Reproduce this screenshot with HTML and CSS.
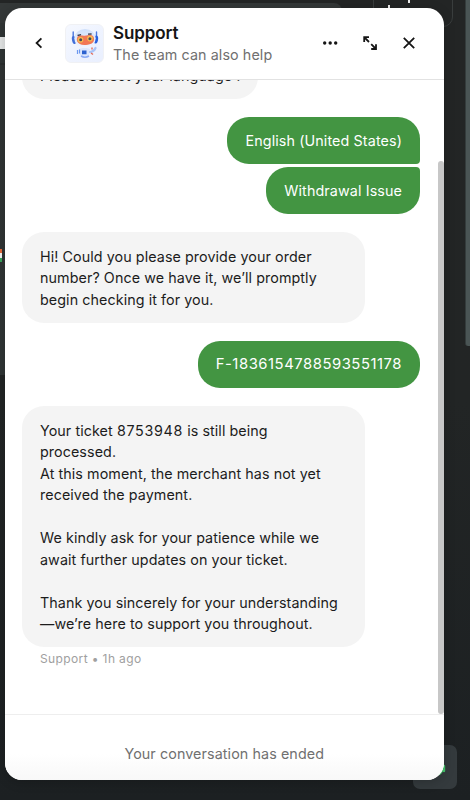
FILE: index.html
```html
<!DOCTYPE html>
<html lang="en">
<head>
    <meta charset="UTF-8">
    <meta name="viewport" content="width=device-width, initial-scale=1.0">
    <title>Support</title>
    <link rel="stylesheet" href="styles.css">
</head>
<body>
    <!-- Dimmed page behind the messenger -->
    <div class="backdrop">
        <div class="backdrop-top"></div>
        <div class="backdrop-left"></div>
        <div class="backdrop-tab"></div>
        <div class="backdrop-flag"></div>
        <div class="backdrop-card"></div>
        <div class="page-scrollbar"></div>
        <div class="launcher">
            <svg width="44" height="44" viewBox="0 0 44 44" fill="none" stroke="#45c46b" stroke-width="2.4" stroke-linecap="round"><path d="M26 29c2-1 3-3 4-6M31 21v5"/></svg>
        </div>
    </div>

    <div class="messenger">
        <header class="messenger-header">
            <button class="icon-button back-button" aria-label="Back">
                <svg width="20" height="20" viewBox="0 0 20 20" fill="none" stroke="#151515" stroke-width="1.8"><path d="M12.4 5.4 7.6 10l4.8 4.6"/></svg>
            </button>
            <div class="avatar">
                <svg width="36" height="36" viewBox="0 0 36 36">
                    <defs>
                        <linearGradient id="shell" x1="0" y1="0" x2="0" y2="1">
                            <stop offset="0" stop-color="#cfe0fb"/>
                            <stop offset="1" stop-color="#f1f5ff"/>
                        </linearGradient>
                    </defs>
                    <path d="M6.2 7v6M29.5 7v6" stroke="#4b78df" stroke-width="1.4" stroke-linecap="round"/>
                    <ellipse cx="7" cy="15" rx="2" ry="4" fill="#426fd9" transform="rotate(-12 7 15)"/>
                    <ellipse cx="29" cy="14.5" rx="2.1" ry="4" fill="#2860dc" transform="rotate(8 29 14.5)"/>
                    <ellipse cx="18" cy="13.5" rx="10.7" ry="9.5" fill="url(#shell)"/>
                    <path d="M10 13c1-3 4-2.500 7-2.300 4 .1 7-1.700 9 .3 2 2.400 1.300 6.500-1.700 7.700-4 1.300-8.500 2-11.500.3-2.500-1.300-3.500-3.500-2.800-6z" fill="#f27855"/>
                    <circle cx="13.5" cy="14.8" r="2.8" fill="#f6bf51"/>
                    <circle cx="23" cy="13.6" r="2.8" fill="#f6bf51"/>
                    <circle cx="13.7" cy="14.8" r="1.5" fill="#48465a"/>
                    <circle cx="22.9" cy="13.7" r="1.5" fill="#48465a"/>
                    <path d="m10.500 10.500 3.600-.8M21 9.200l3.600-.2" stroke="#3c4050" stroke-width="1.3"/>
                    <path d="M12 24c3-1.500 8-1.500 11 0l-1 6c-2 3.500-7 3.500-9 0z" fill="#dce7fd"/>
                    <path d="M15 25.500h4.500v3.800H15z" fill="#2c62cf"/>
                    <path d="M10.500 25v4M12.500 24.500v4" stroke="#6c98ef" stroke-width="1.2"/>
                    <path d="M23 27c3-.2 4.500-1.500 5.500-4" stroke="#a9c4f7" stroke-width="2.2" stroke-linecap="round" fill="none"/>
                    <path d="m24 28 2 1.500M25 24.500v-2" stroke="#e3705f" stroke-width="1.5"/>
                    <path d="M14 31q4 2.500 8 0" stroke="#8eadf5" stroke-width="1.5" fill="none"/>
                </svg>
            </div>
            <div class="header-text">
                <h1 class="header-title">Support</h1>
                <p class="header-subtitle">The team can also help</p>
            </div>
            <div class="header-actions">
                <button class="icon-button" aria-label="More options">
                    <svg width="20" height="20" viewBox="0 0 20 20" fill="#151515"><circle cx="4.7" cy="10" r="1.7"/><circle cx="10.2" cy="10" r="1.7"/><circle cx="15.7" cy="10" r="1.7"/></svg>
                </button>
                <button class="icon-button" aria-label="Expand window">
                    <svg width="20" height="20" viewBox="0 0 20 20" fill="none" stroke="#151515" stroke-width="1.8"><path d="M4.200 9V4.200H9M4.200 4.200l4.800 4.800M11.200 11.200l4.800 4.800M16 11.200V16h-4.800"/></svg>
                </button>
                <button class="icon-button" aria-label="Close">
                    <svg width="20" height="20" viewBox="0 0 20 20" fill="none" stroke="#151515" stroke-width="1.8"><path d="m4.800 4.800 10.400 10.400M15.200 4.800 4.800 15.200"/></svg>
                </button>
            </div>
        </header>

        <main class="conversation">
            <div class="message received question">Please select your language :</div>
            <div class="sent-group">
                <div class="message sent first">English (United States)</div>
                <div class="message sent last">Withdrawal Issue</div>
            </div>
            <div class="message received">Hi! Could you please provide your order<br>number? Once we have it, we’ll promptly<br>begin checking it for you.</div>
            <div class="message sent number">F-1836154788593551178</div>
            <div class="message received">Your ticket <span class="ticket">8753948</span> is still being<br>processed.<br>At this moment, the merchant has not yet<br>received the payment.<br><br>We kindly ask for your patience while we<br>await further updates on your ticket.<br><br>Thank you sincerely for your understanding<br>—we’re here to support you throughout.</div>
            <p class="message-meta">Support • 1h ago</p>
            <div class="scroll-thumb"></div>
        </main>

        <footer class="messenger-footer">Your conversation has ended</footer>
    </div>
</body>
</html>
```
FILE: styles.css
```css
:root {
    --green: #439542;
    --bubble: #f4f4f4;
    --text: #1c1c1c;
    --text-muted: #707070;
    --dark: #212424;
}

* {
    box-sizing: border-box;
    margin: 0;
    padding: 0;
}

body {
    font-family: 'Inter', 'Liberation Sans', sans-serif;
    background-color: var(--dark);
    color: var(--text);
    height: 800px;
    padding: 7.5px 26.5px 20px 5px;
    position: relative;
    overflow: hidden;
}

/* Page behind the widget */
.backdrop {
    position: absolute;
    inset: 0;
    overflow: hidden;
    background: linear-gradient(#232525, #222525 50%, #1c2022);
}

.backdrop > div {
    position: absolute;
}

.backdrop-top {
    top: 3px;
    left: 0;
    width: 342px;
    height: 20px;
    background-color: #343838;
    border-radius: 0 8px 0 0;
}

.backdrop-left {
    top: 23px;
    left: 0;
    width: 8px;
    height: 352px;
    background: linear-gradient(#303535 0 40px, #242727 41px, #303434 42px, #303535);
}

.backdrop-tab {
    top: 37px;
    left: 0;
    width: 5px;
    height: 12px;
    background-color: #e4e6e6;
}

.backdrop-flag {
    top: 249px;
    left: 0;
    width: 2px;
    height: 13px;
    background: linear-gradient(#e66a3a 0 4px, #f5f5f5 4px 9px, #38a55a 9px);
}

.backdrop-card {
    top: -10px;
    left: 373px;
    width: 80px;
    height: 37px;
    border: 1px solid #393d3d;
    border-radius: 10px;
}

/* Tips of the clipped label inside the card */
.backdrop-card::before {
    content: '';
    position: absolute;
    top: 14px;
    left: 14px;
    width: 2px;
    height: 4px;
    background-color: #eeeeee;
    box-shadow: 20px -6px #eeeeee;
}

.page-scrollbar {
    top: 0;
    right: 0;
    width: 5px;
    height: 346px;
    background-color: #4a5555;
    border-left: 1px solid #343c3c;
    border-radius: 0 0 0 3px;
}

.launcher {
    left: 413px;
    top: 745px;
    width: 44px;
    height: 44px;
    border-radius: 7px;
    background-color: #343a3d;
}

.messenger {
    position: relative;
    display: flex;
    flex-direction: column;
    height: 772.5px;
    background-color: #ffffff;
    border-radius: 17px;
    overflow: hidden;
    box-shadow: 0 2px 12px rgba(0, 0, 0, 0.2);
}

/* Header */
.messenger-header {
    display: flex;
    align-items: center;
    flex-shrink: 0;
    height: 72px;
    padding: 0 24.5px 0 24px;
    border-bottom: 1px solid #e2e2e2;
}

.icon-button {
    display: flex;
    width: 20px;
    height: 20px;
    border: none;
    background: none;
    cursor: pointer;
}

.avatar {
    display: flex;
    align-items: center;
    justify-content: center;
    width: 39px;
    height: 39px;
    margin-left: 16px;
    border: 1.5px solid #f0f1f4;
    border-radius: 6px;
    background: linear-gradient(135deg, #f5f8ff, #e9effe);
}

.header-text {
    margin-left: 9px;
}

.header-title {
    font-size: 17px;
    font-weight: 600;
    line-height: 22px;
    letter-spacing: -0.1px;
    color: #151515;
}

.header-subtitle {
    font-size: 14.3px;
    line-height: 21px;
    letter-spacing: 0.1px;
    color: var(--text-muted);
}

.header-actions {
    display: flex;
    gap: 19.5px;
    margin-left: auto;
}

/* Conversation */
.conversation {
    position: relative;
    display: flex;
    flex: 1;
    flex-direction: column;
    justify-content: flex-end;
    align-items: flex-start;
    gap: 18px;
    min-height: 0;
    padding: 0 23.5px 46.8px 17px;
    overflow: hidden;
}

.message {
    padding: 13.5px 18px 12.5px;
    border-radius: 22px;
    font-size: 14.3px;
    line-height: 21.5px;
    letter-spacing: 0.08px;
    white-space: nowrap;
    flex-shrink: 0;
}

.received {
    width: 343px;
    background-color: var(--bubble);
}

.question {
    width: auto;
}

.ticket {
    letter-spacing: 0.7px;
}

.sent {
    align-self: flex-end;
    background-color: var(--green);
    color: #ffffff;
    letter-spacing: 0.12px;
}

.sent-group {
    display: flex;
    flex-direction: column;
    flex-shrink: 0;
    gap: 2.5px;
    align-self: flex-end;
}

.sent.first {
    align-self: flex-end;
    border-bottom-right-radius: 4px;
}

.sent.last {
    border-top-right-radius: 4px;
}

.sent.number {
    font-size: 14.8px;
    letter-spacing: 0.55px;
}

.message-meta {
    margin: -14px 0 0 18px;
    font-size: 12px;
    line-height: 16px;
    letter-spacing: 0.38px;
    color: #a0a0a0;
}

.scroll-thumb {
    position: absolute;
    top: 81px;
    right: 0;
    bottom: 0;
    width: 5.5px;
    border-radius: 3px;
    background-color: #c7c7c7;
}

.messenger-footer {
    flex-shrink: 0;
    height: 66px;
    border-top: 1.5px solid #eeeeee;
    background: linear-gradient(#ffffff 60%, #f8f8f8);
    color: var(--text-muted);
    font-size: 14.3px;
    line-height: 77px;
    letter-spacing: 0.1px;
    text-align: center;
}
```
